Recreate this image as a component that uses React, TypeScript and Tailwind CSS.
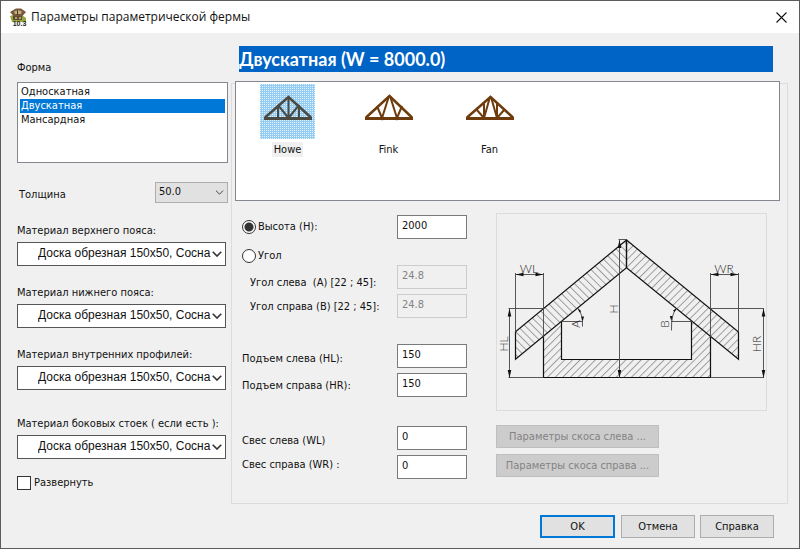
import { useState } from "react";
import type { ReactNode } from "react";

const MATERIAL = "Доска обрезная 150x50, Сосна";

function Chevron({ className }: { className: string }) {
  return (
    <svg viewBox="0 0 10 6" className={className} fill="none" stroke="currentColor" aria-hidden="true">
      <path d="M0.7 0.7 5 5 9.3 0.7" />
    </svg>
  );
}

function MaterialSelect({ id, label }: { id: string; label: string }) {
  return (
    <div className="flex flex-col">
      <label htmlFor={id} className="h-4 leading-4 whitespace-nowrap">
        {label}
      </label>
      <div className="mt-[3px] mr-[2px] grid items-center">
        <select
          id={id}
          className="col-start-1 row-start-1 h-6 w-full appearance-none border border-[#555] bg-white pr-2 pb-[2px] pl-[20px] font-['Liberation_Sans',sans-serif] text-[12px] text-[#111] outline-none"
        >
          <option>{MATERIAL}</option>
        </select>
        <Chevron className="pointer-events-none col-start-1 row-start-1 mr-1 h-[6px] w-[10px] justify-self-end stroke-[1.6] text-[#333]" />
      </div>
    </div>
  );
}

const TRUSSES: { name: string; web: string; top: number }[] = [
  { name: "Howe", web: "M28.5 13V34M18 21V34L28.5 34 18 21M39 21V34M28.5 34 39 21", top: 13 },
  { name: "Fink", web: "M28 12 21 34 16 22M29 12 36 34 41 22", top: 12 },
  { name: "Fan", web: "M28 13 22 34 14 25M22 34V18M29 13 35 34 43 25M35 34V18", top: 13 },
];

function TrussIcon({ web, top, selected }: { web: string; top: number; selected: boolean }) {
  const color = selected ? "#4a4a42" : "#6e3c0c";
  return (
    <svg viewBox="0 0 55 55" className="h-[55px] w-[55px]" fill="none" aria-hidden="true">
      <defs>
        <pattern id="dots" width="2" height="2" patternUnits="userSpaceOnUse">
          <rect width="2" height="2" fill="#94cbf3" />
          <rect width="1" height="1" fill="#e3f3fd" />
        </pattern>
      </defs>
      {selected && <rect width="55" height="55" fill="url(#dots)" />}
      <path d={web} stroke={color} strokeWidth="2" />
      <path d={`M5 33.5 28.5 ${top} 51 33.5`} stroke={color} strokeWidth="2.5" />
      <path d="M4 34.5H52" stroke={color} strokeWidth="3" />
    </svg>
  );
}

function Field({ id, value, disabled = false }: { id: string; value: string; disabled?: boolean }) {
  return (
    <input
      id={id}
      aria-labelledby={`${id}-label`}
      defaultValue={value}
      disabled={disabled}
      className="h-6 w-[70px] border border-[#7a7a7a] bg-white px-1 pb-[3px] text-[11px] text-[#111] outline-none disabled:border-[#ccc] disabled:bg-[#f0f0f0] disabled:text-[#838383]"
    />
  );
}

function FieldLabel({ id, children }: { id: string; children: ReactNode }) {
  return (
    <label id={`${id}-label`} htmlFor={id} className="h-6 leading-6 whitespace-pre">
      {children}
    </label>
  );
}

function RadioLabel({ id, checked, onSelect, children }: { id: string; checked: boolean; onSelect: () => void; children: ReactNode }) {
  return (
    <label id={id} className="flex h-6 items-center gap-[2px]">
      <input
        type="radio"
        name="mode"
        checked={checked}
        onChange={onSelect}
        className="h-[14px] w-[14px] appearance-none rounded-full border border-[#333] bg-white bg-clip-padding outline-none checked:bg-[radial-gradient(circle,#333_0_4px,white_5px)]"
      />
      {children}
    </label>
  );
}

function RoofDiagram() {
  return (
    <svg
      viewBox="497 214 269 196"
      className="h-[198px] w-[271px] border border-[#dcdcdc]"
      fill="none"
      stroke="#111"
      role="img"
      aria-label="H, HL, HR, WL, WR, A, B"
    >
      <defs>
        <pattern id="hatchUp" width="5.4" height="5.4" patternUnits="userSpaceOnUse" patternTransform="rotate(45)">
          <path d="M0.5 0V5.4" stroke="#888" strokeWidth="0.8" />
        </pattern>
        <pattern id="hatchDown" width="5.4" height="5.4" patternUnits="userSpaceOnUse" patternTransform="rotate(-45)">
          <path d="M0.5 0V5.4" stroke="#888" strokeWidth="0.8" />
        </pattern>
      </defs>
      <g strokeWidth="1.2">
        <path d="M543.5 336.5 561.5 321.5V359.5H691.5V321.5L710.5 336.5V377.5H543.5Z" fill="url(#hatchUp)" stroke="none" />
        <path d="M543.5 336.5V377.5H710.5V336.5M561.5 321.5V359.5H691.5V321.5" />
        <path d="M626.5 240 515.5 331.7V359.3L626.5 267.7Z" fill="url(#hatchDown)" />
        <path d="M626.5 240 738.5 332V359.3L626.5 267.7Z" fill="url(#hatchUp)" />
      </g>
      <g stroke="#444" strokeWidth="0.9">
        <path d="M515.5 273V332M543.5 273V337M515.5 274.5H543.5" />
        <path d="M710.5 273V337M738.5 273V332M710.5 274.5H738.5" />
        <path d="M508.5 308.5H543.5M509.5 309V378M508.5 377.5H543.5" />
        <path d="M710.5 308.5H764M763.5 309V378M710.5 377.5H764" />
        <path d="M619.5 240V378M618.5 239.5H627" />
        <path d="M561.5 321.5H583M578 308.5Q583 314 582.5 326.5" />
        <path d="M691.5 321.5H671M676.5 308.5Q671 314 671.5 330.5" />
      </g>
      <g fill="#111" stroke="none">
        <path d="M515.5 274.5l8-1.7v3.4zM543.5 274.5l-8-1.7v3.4zM710.5 274.5l8-1.7v3.4zM738.5 274.5l-8-1.7v3.4z" />
        <path d="M509.5 308.5l-1.8 8h3.6zM509.5 378l-1.8-8h3.6zM763.5 308.5l-1.8 8h3.6zM763.5 378l-1.8-8h3.6z" />
        <path d="M619.5 240l-1.8 8h3.6zM619.5 378l-1.8-8h3.6z" />
        <path d="M577.5 308l3.6 3-1.6 1.5zM582.7 321.5l-1.5-5h2.8zM677 308l-4 2.5 1.6 1.6zM671.3 321l-1.5-5h2.8z" />
      </g>
      <g fill="#222" stroke="none" textAnchor="middle" className="font-['Lato','Liberation_Sans',sans-serif] text-[12px] font-light">
        <text x="529" y="273">WL</text>
        <text x="724" y="273">WR</text>
        <text transform="translate(508 344) rotate(-90)">HL</text>
        <text transform="translate(761 344) rotate(-90)">HR</text>
        <text transform="translate(618 309) rotate(-90)">H</text>
        <text transform="translate(580 324) rotate(-90)">A</text>
        <text transform="translate(669 324) rotate(-90)">B</text>
      </g>
    </svg>
  );
}

function AppIcon() {
  return (
    <svg viewBox="0 0 18 18" className="h-[18px] w-[18px]" aria-hidden="true">
      <path d="M1 8 4 7h9l4 3v4H3z" fill="#93a83e" />
      <path d="M1 4 7 0.5h5L17 4 13 8.5H5z" fill="#75593a" />
      <path d="M5 3.5 9 2l4 1.5L12 6H6z" fill="#c7ad82" />
      <path d="M8 2h1v5H8z" fill="#4d3824" />
      <path d="M4 8h9v4H4z" fill="#5f4931" />
      <path d="M6 9h2v2H6zM10 9h2v2h-2z" fill="#b9a078" />
      <text x="10.5" y="17.5" textAnchor="middle" fill="#222" className="font-['Liberation_Sans',sans-serif] text-[7px] font-bold">
        10.3
      </text>
    </svg>
  );
}

const SHAPES = ["Односкатная", "Двускатная", "Мансардная"];

export default function App() {
  const [shape, setShape] = useState("Двускатная");
  const [truss, setTruss] = useState("Howe");
  const [mode, setMode] = useState("height");

  return (
    <div className="flex min-h-screen flex-col border border-[#5c5c5c] bg-[#f0f0f0] font-['DejaVu_Sans_Condensed','DejaVu_Sans',sans-serif] text-[11px] text-[#111]">
      <header className="flex h-8 items-center bg-white pr-[11px] pl-2">
        <AppIcon />
        <h1 className="ml-1 font-['Open_Sans',sans-serif] text-[12px]">Параметры параметрической фермы</h1>
        <button type="button" aria-label="Закрыть" className="ml-auto p-px">
          <svg viewBox="0 0 11 11" className="h-[11px] w-[11px]" stroke="#111" strokeWidth="1.1">
            <path d="M0.5 0.5l10 10M10.5 0.5l-10 10" />
          </svg>
        </button>
      </header>

      <main className="flex gap-[3px] pr-[11px] pl-4">
        <section className="flex w-[211px] shrink-0 flex-col pt-[27px]">
          <h2 className="h-4 leading-4">Форма</h2>
          <ul role="listbox" aria-label="Форма" className="mt-[6px] h-[81px] border border-[#828790] bg-white p-[2px]">
            {SHAPES.map((s) => (
              <li key={s} role="option" aria-selected={s === shape}>
                <button
                  type="button"
                  onClick={() => setShape(s)}
                  className={s === shape ? "block h-[14px] w-full bg-[#0078d7] px-px text-left leading-[14px] text-white" : "block h-[14px] w-full px-px text-left leading-[14px]"}
                >
                  {s}
                </button>
              </li>
            ))}
          </ul>

          <div className="mt-[19px] flex items-end justify-between pl-[2px]">
            <label htmlFor="thickness">Толщина</label>
            <div className="grid items-center">
              <select
                id="thickness"
                className="col-start-1 row-start-1 h-[21px] w-[73px] appearance-none border border-[#adadad] bg-[#e1e1e1] px-[3px] outline-none"
              >
                <option>50.0</option>
              </select>
              <Chevron className="pointer-events-none col-start-1 row-start-1 mr-1 h-[5px] w-[9px] justify-self-end stroke-[1.2] text-[#444]" />
            </div>
          </div>

          <div className="mt-5 flex flex-col gap-[19px]">
            <MaterialSelect id="top-chord" label="Материал верхнего пояса:" />
            <MaterialSelect id="bottom-chord" label="Материал нижнего пояса:" />
            <MaterialSelect id="webs" label="Материал внутренних профилей:" />
          </div>
          <div className="mt-[26px]">
            <MaterialSelect id="side-posts" label="Материал боковых стоек ( если есть ):" />
          </div>

          <label className="mt-4 flex items-center gap-[3px]">
            <input type="checkbox" className="h-[14px] w-[14px] appearance-none border border-[#333] bg-white outline-none checked:bg-[#333]" />
            Развернуть
          </label>
        </section>

        <section className="flex min-w-0 flex-1 flex-col pt-[13px]">
          <h2 className="mr-[15px] ml-2 h-[26px] bg-[#0063c6] font-['Lato',sans-serif] text-[18px] leading-[26px] font-bold text-white">
            Двускатная (W = 8000.0)
          </h2>

          <div className="mt-[11px] h-[421px] border border-[#dcdcdc]">
            <div role="listbox" aria-label="Тип фермы" className="-mt-[3px] mr-[7px] ml-[3px] flex h-[120px] items-start border border-[#828790] bg-white pt-[2px] pl-px">
              {TRUSSES.map((t) => (
                <button
                  key={t.name}
                  type="button"
                  role="option"
                  aria-selected={t.name === truss}
                  onClick={() => setTruss(t.name)}
                  className="flex w-[101px] flex-col items-center gap-[3px]"
                >
                  <TrussIcon web={t.web} top={t.top} selected={t.name === truss} />
                  <span className={t.name === truss ? "bg-[#f0f0f0] px-[2px] leading-[15px]" : "px-[2px] leading-[15px]"}>{t.name}</span>
                </button>
              ))}
            </div>

            <div className="mt-3 flex pl-[10px]">
              <div className="mt-[2px] flex w-[155px] shrink-0 flex-col">
                <RadioLabel id="height-label" checked={mode === "height"} onSelect={() => setMode("height")}>
                  Высота (H):
                </RadioLabel>
                <div className="mt-[5px] flex flex-col">
                  <RadioLabel id="angle-label" checked={mode === "angle"} onSelect={() => setMode("angle")}>
                    Угол
                  </RadioLabel>
                </div>
                <div className="mt-[3px] flex flex-col pl-2">
                  <FieldLabel id="angle-left">Угол слева  (A) [22 ; 45]:</FieldLabel>
                  <FieldLabel id="angle-right">Угол справа (B) [22 ; 45]:</FieldLabel>
                </div>
                <div className="mt-7 flex flex-col gap-[3px]">
                  <FieldLabel id="rise-left">Подъем слева (HL):</FieldLabel>
                  <FieldLabel id="rise-right">Подъем справа (HR):</FieldLabel>
                </div>
                <div className="mt-[31px] flex flex-col">
                  <FieldLabel id="overhang-left">Свес слева (WL)</FieldLabel>
                  <FieldLabel id="overhang-right">Свес справа (WR) :</FieldLabel>
                </div>
              </div>

              <div className="mt-[2px] flex shrink-0 flex-col">
                <Field id="height" value="2000" />
                <div className="mt-[26px] flex flex-col gap-[5px]">
                  <Field id="angle-left" value="24.8" disabled />
                  <Field id="angle-right" value="24.8" disabled />
                </div>
                <div className="mt-[26px] flex flex-col gap-[5px]">
                  <Field id="rise-left" value="150" />
                  <Field id="rise-right" value="150" />
                </div>
                <div className="mt-[29px] flex flex-col gap-[5px]">
                  <Field id="overhang-left" value="0" />
                  <Field id="overhang-right" value="0" />
                </div>
              </div>

              <div className="ml-[29px] flex flex-col items-start">
                <RoofDiagram />
                <div className="mt-[14px] flex flex-col gap-[6px]">
                  <button type="button" disabled className="h-[23px] w-[163px] border border-[#bfbfbf] bg-[#ccc] pt-[2px] text-[#838383]">
                    Параметры скоса слева ...
                  </button>
                  <button type="button" disabled className="h-[23px] w-[163px] border border-[#bfbfbf] bg-[#ccc] pt-[2px] text-[#838383]">
                    Параметры скоса справа ...
                  </button>
                </div>
              </div>
            </div>
          </div>
        </section>
      </main>

      <footer className="mt-[11px] mb-[9px] flex justify-end gap-[5px] pr-[25px]">
        <button type="button" className="mr-px h-[23px] w-[75px] border-2 border-[#0078d7] bg-[#e1e1e1] pt-px">
          OK
        </button>
        <button type="button" className="h-[23px] w-[74px] border border-[#adadad] bg-[#e1e1e1] pt-[2px]">
          Отмена
        </button>
        <button type="button" className="h-[23px] w-[74px] border border-[#adadad] bg-[#e1e1e1] pt-[2px]">
          Справка
        </button>
      </footer>
    </div>
  );
}
